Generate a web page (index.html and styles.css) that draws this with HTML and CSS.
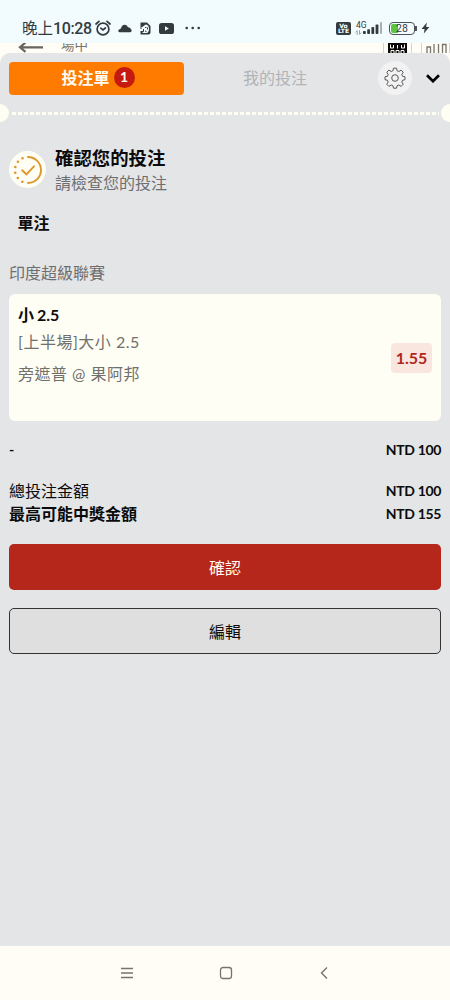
FILE: index.html
```html
<!DOCTYPE html>
<html lang="zh-Hant">
<head>
    <meta charset="utf-8">
    <meta name="viewport" content="width=device-width, initial-scale=1">
    <title>投注單</title>
    <link rel="stylesheet" href="styles.css">
</head>
<body>
    <div class="status-bar">
        <span class="clock">晚上<span class="digits">10:28</span></span>
        <svg class="i-alarm" width="16" height="17" viewBox="0 0 16 17" fill="none" stroke="#333b3f" stroke-width="1.7" stroke-linecap="round">
            <circle cx="8" cy="9" r="5.9"/>
            <path d="M1 4L4 1.3M15 4l-3-2.7M5.8 8.2L8 10l2.4-2"/>
        </svg>
        <svg class="i-cloud" width="14" height="9" viewBox="0 0 14 9" fill="#333b3f">
            <path d="M1.5 8.200C-.2 8 0 5.800 1.500 5.300 2.800 5 3 4.500 3.300 3.600 3.900 1.600 5 .7 6.600.7c1.700 0 2.800.9 3.300 2.600 2.200.2 3 1.300 3.600 2.800.4 1.200-.3 2.100-1.400 2.100z"/>
        </svg>
        <svg class="i-file" width="11" height="13" viewBox="0 0 11 13">
            <path d="M.5.500H7l3.500 3.500v6.500a2 2 0 0 1-2 2H.5V9H3V7H.5z" fill="#333b3f"/>
            <path d="M1.500 5C3 5 4.500 3 6 2.500c2 .5 3 2 3 4.500 0 2-1 4-2.500 4H2l2-1.500V7H1.500z" fill="#f2fbfe"/>
            <path d="M5 5.500h1.500M7.500 5.500v2M5 9l1.500.5" stroke="#333b3f"/>
        </svg>
        <svg class="i-video" width="15" height="11" viewBox="0 0 15 11">
            <rect width="15" height="11" rx="2.600" fill="#333b3f"/>
            <path d="M6 3.200v4.600l3.900-2.300z" fill="#f2fbfe"/>
        </svg>
        <svg class="i-more" width="16" height="4" viewBox="0 0 16 4" fill="#333b3f">
            <circle cx="1.700" cy="2" r="1.300"/><circle cx="7.700" cy="2" r="1.300"/><circle cx="13.700" cy="2" r="1.300"/>
        </svg>
        <span class="volte"><span>Vo</span><span>LTE</span></span>
        <span class="network">
            <span>4G</span>
            <svg width="7" height="5" viewBox="0 0 7 5" fill="none" stroke="#8b9295" stroke-width=".8">
                <path d="M2.200 5V.7L.5 2.300M4.500 0v4.300l1.800-1.600"/>
            </svg>
        </span>
        <svg class="i-signal" width="20" height="12" viewBox="0 0 20 12" fill="#333b3f">
            <rect x="0" y="9" width="2.800" height="3" rx=".8"/>
            <rect x="4.200" y="7.200" width="2.800" height="4.800" rx=".8"/>
            <rect x="8.400" y="5" width="2.800" height="7" rx=".8"/>
            <rect x="12.600" y="2.500" width="2.800" height="9.500" rx=".8"/>
            <rect x="17" y="0" width="2" height="12" rx=".8" fill="#a9b0b3"/>
        </svg>
        <span class="battery">28</span>
        <span class="battery-tip"></span>
        <svg class="i-bolt" width="9" height="12" viewBox="0 0 9 12" fill="#333b3f"><path d="M5.800.5L.6 6.900h3L2.800 11.500 8.400 5H5.200z"/></svg>
    </div>

    <div class="page-strip">
        <svg class="i-back" width="26" height="10" viewBox="0 0 26 10" fill="none" stroke="#66655f" stroke-width="2.200">
            <path d="M25 4.300H2M7.500-.5L2 4.300l5.500 4.500"/>
        </svg>
        <span class="strip-title">場中</span>
        <svg class="strip-icons" width="67" height="10" viewBox="0 0 67 10">
            <path d="M.5 0v10M28.500 0v10M38.500 0v10M66.500 0v10" stroke="#d5d4ce"/>
            <rect x="5" y="0" width="19" height="10" fill="#080808"/>
            <path d="M7.500 1.500v3.500h3V2M21.500 1.500v3.500h-3V2M14.500 2v3.500M8 10V7.500h3V10M13 10V7.500h3V10M18 10V7.500h3V10" fill="none" stroke="#fffdf5"/>
            <path d="M44 10V4h3.500v6M51 10V1M55.500 10V1M59.500 10V1.500h3.500V10" fill="none" stroke="#77746d" stroke-width="1.300"/>
        </svg>
    </div>

    <div class="slip">
        <div class="tabs">
            <button class="tab active">投注單 <span class="count">1</span></button>
            <button class="tab">我的投注</button>
            <span class="settings">
                <svg width="22" height="22" viewBox="0 0 22 22" fill="none" stroke="#55585a" stroke-width="1" stroke-linejoin="round">
                    <path d="M9.500 1.200h3l.6 2.600 1.700.7 2.300-1.400 2.100 2.100-1.400 2.300.7 1.700 2.500.6v2.900l-2.500.6-.7 1.700 1.400 2.300-2.100 2.100-2.300-1.400-1.700.7-.6 2.500h-3l-.6-2.500-1.700-.7-2.300 1.400-2.100-2.100 1.400-2.300-.7-1.700L1 12.700V9.800l2.500-.6.7-1.700-1.400-2.300 2.100-2.100 2.300 1.400 1.700-.7z"/>
                    <circle cx="11" cy="11" r="3.300"/>
                </svg>
            </span>
            <svg class="i-down" width="14" height="9" viewBox="0 0 14 9" fill="none" stroke="#000" stroke-width="2.700"><path d="M1 1.300l6 5.900 6-5.900"/></svg>
        </div>

        <div class="tear">
            <span class="notch"></span>
            <span class="dashes"></span>
            <span class="notch"></span>
        </div>

        <div class="content">
            <div class="heading">
                <span class="check">
                    <svg width="30" height="30" viewBox="0 0 30 30" fill="none" stroke="#e0962a" stroke-width="1.900" stroke-linecap="round">
                        <path d="M15 2a13 13 0 0 1 0 26"/>
                        <path d="M15 28A13 13 0 0 1 15 2" stroke-width="2.600" stroke-dasharray="0 5.830" stroke-dashoffset="-5.800"/>
                        <path d="M9.200 15.200l4.200 4.100 7.600-8"/>
                    </svg>
                </span>
                <div>
                    <h1>確認您的投注</h1>
                    <p>請檢查您的投注</p>
                </div>
            </div>

            <h2>單注</h2>
            <p class="league">印度超級聯賽</p>

            <div class="bet-card">
                <div>
                    <p class="pick">小 2.5</p>
                    <p class="market">[上半場]大小 2.5</p>
                    <p class="match">旁遮普 @ 果阿邦</p>
                </div>
                <span class="odds">1.55</span>
            </div>

            <div class="row stake"><b>-</b><b>NTD 100</b></div>
            <div class="row"><span>總投注金額</span><b>NTD 100</b></div>
            <div class="row"><strong>最高可能中獎金額</strong><b>NTD 155</b></div>

            <button class="btn confirm">確認</button>
            <button class="btn edit">編輯</button>
        </div>
    </div>

    <div class="nav-bar">
        <svg width="14" height="12" viewBox="0 0 14 12" fill="none" stroke="#77736d" stroke-width="1.300"><path d="M1 1.500h12M1 6h12M1 10.500h12"/></svg>
        <svg width="14" height="14" viewBox="0 0 14 14" fill="none" stroke="#77736d" stroke-width="1.300"><rect x="1.500" y="1.500" width="11" height="11" rx="2.500"/></svg>
        <svg width="14" height="14" viewBox="0 0 14 14" fill="none" stroke="#77736d" stroke-width="1.400"><path d="M10 1.500L4.500 7l5.500 5.500"/></svg>
    </div>
</body>
</html>
```
FILE: styles.css
```css
* {
    box-sizing: border-box;
}

body {
    display: flex;
    flex-direction: column;
    height: 1000px;
    margin: 0;
    background-color: #fffdf5;
    color: #0b0b0b;
    font-family: Lato, "Noto Sans CJK TC", sans-serif;
    font-size: 16px;
    overflow: hidden;
}

h1, h2, p {
    margin: 0;
}

button {
    padding: 0;
    border: none;
    font: inherit;
}

svg {
    display: block;
    flex: none;
}

.status-bar {
    display: flex;
    align-items: center;
    flex: none;
    height: 43px;
    padding: 13px 0 0 22px;
    background-color: #f2fbfe;
    color: #333b3f;
}

.clock {
    width: 73px;
    font-size: 15.5px;
    line-height: 24px;
    white-space: nowrap;
}

.digits {
    font-family: Roboto, sans-serif;
    font-size: 16px;
    font-weight: 500;
    letter-spacing: -0.4px;
}

.i-cloud {
    margin-left: 7px;
}

.i-file {
    margin-left: 8px;
}

.i-video {
    margin-left: 8px;
}

.i-more {
    margin-left: 11px;
}

.volte {
    display: flex;
    flex-direction: column;
    align-items: center;
    justify-content: center;
    width: 15px;
    height: 13px;
    margin-left: 135px;
    border-radius: 2px;
    background-color: #333b3f;
    color: #fff;
    font: bold 6px/5.5px "DejaVu Sans", sans-serif;
}

.network {
    width: 12px;
    margin-left: 5px;
    font: 8.5px/9px Roboto, sans-serif;
}

.network svg {
    margin-left: -1px;
}

.i-signal {
    margin-left: -5px;
}

.battery {
    width: 26px;
    height: 13px;
    margin-left: 6px;
    padding: 1px;
    border: 1.5px solid #4b5356;
    border-radius: 4px;
    background: linear-gradient(to right, #5cc53b 7px, #f8fdff 7px) content-box;
    font: 10.5px/9.5px Roboto, sans-serif;
    text-align: center;
}

.battery-tip {
    width: 2px;
    height: 5px;
    background-color: #4b5356;
}

.i-bolt {
    margin-left: 4px;
}

.page-strip {
    display: flex;
    flex: none;
    height: 10px;
    padding-left: 18px;
    overflow: hidden;
}

.strip-title {
    margin-left: 17px;
    color: #77756f;
    font-size: 13.5px;
    line-height: 4px;
}

.strip-icons {
    margin-left: auto;
}

.slip {
    flex: none;
    height: 893px;
    border-radius: 10px 10px 0 0;
    background-color: #e4e5e7;
}

.tabs {
    display: flex;
    align-items: center;
    height: 50px;
    padding-left: 9px;
}

.tab {
    display: flex;
    align-items: center;
    justify-content: center;
    width: 182px;
    height: 33px;
    padding-bottom: 1px;
    background-color: transparent;
    color: #b2b3b5;
    line-height: 30px;
}

.tab.active {
    width: 175px;
    padding-left: 3px;
    border-radius: 4px;
    background-color: #ff7b00;
    color: #fffdf5;
    font-weight: bold;
}

.count {
    width: 21px;
    height: 21px;
    margin-left: 4px;
    border-radius: 50%;
    background-color: #c6190f;
    font-size: 14px;
    line-height: 20px;
    text-align: center;
}

.settings {
    display: flex;
    align-items: center;
    justify-content: center;
    width: 34px;
    height: 34px;
    margin-left: 12px;
    border-radius: 50%;
    background-color: #f2f2f3;
}

.i-down {
    margin: 1px 0 0 14px;
}

.tear {
    display: flex;
    align-items: center;
    justify-content: space-between;
    height: 20px;
    margin: 0 -9px;
}

.notch {
    width: 18px;
    height: 18px;
    border-radius: 50%;
    background-color: #fffef3;
}

.dashes {
    flex: 1;
    height: 3px;
    margin: 1px 2px 0 3px;
    background: repeating-linear-gradient(to right, #fffef3 0 4px, transparent 4px 6px);
}

.content {
    padding: 23px 9px 0;
}

.heading {
    display: flex;
    align-items: flex-start;
    gap: 9px;
}

.check {
    display: flex;
    align-items: center;
    justify-content: center;
    width: 37px;
    height: 37px;
    margin-top: 5px;
    border-radius: 50%;
    background-color: #fffef5;
}

.heading h1 {
    font-size: 18.4px;
    line-height: 25px;
}

.heading p {
    color: #6d6e70;
    line-height: 24px;
}

h2 {
    margin: 16px 0 0 8.5px;
    font-size: 16px;
    line-height: 24px;
}

.league {
    margin-top: 26px;
    color: #6d6e70;
    line-height: 24px;
}

.bet-card {
    display: flex;
    justify-content: space-between;
    height: 127px;
    margin-top: 9px;
    padding: 9px 9px 0;
    border-radius: 6px;
    background-color: #fffef5;
}

.pick {
    font-weight: bold;
    line-height: 24px;
    word-spacing: -1px;
}

.market,
.match {
    color: #70706c;
    letter-spacing: 0.5px;
    line-height: 32px;
}

.market {
    margin-top: -1px;
}

.odds {
    width: 41px;
    height: 30px;
    margin-top: 40px;
    border-radius: 4px;
    background-color: #f8e6df;
    color: #b3261b;
    font-size: 16px;
    font-weight: bold;
    line-height: 29px;
    text-align: center;
}

.row {
    display: flex;
    align-items: center;
    justify-content: space-between;
    height: 23px;
    line-height: 23px;
}

.row b {
    font-size: 14px;
    letter-spacing: -0.35px;
}

.stake {
    margin: 17px 0 18px;
}

.btn {
    display: block;
    width: 100%;
    height: 46px;
    padding-bottom: 1px;
    border-radius: 5px;
}

.confirm {
    margin-top: 19px;
    background-color: #b5261b;
    color: #fffdf5;
}

.edit {
    margin-top: 18px;
    border: 1px solid #333;
    background-color: #dfdfdf;
    color: #0b0b0b;
}

.nav-bar {
    display: flex;
    align-items: center;
    justify-content: space-between;
    flex: 1;
    padding: 0 119px 0 120px;
}
```
